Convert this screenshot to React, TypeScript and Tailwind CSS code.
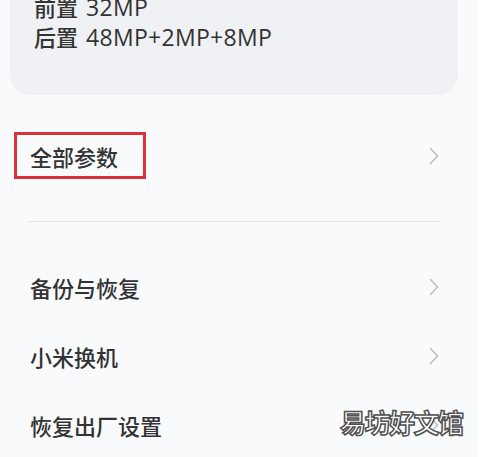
import React from "react";

const Chevron = () => (
  <svg className="mt-[5px]" width="10" height="18" viewBox="0 0 10 18" fill="none">
    <path d="M1.5 1.5 L8.5 9 L1.5 16.5" stroke="#bdbdbd" strokeWidth="1.4" strokeLinecap="round" strokeLinejoin="round" />
  </svg>
);

const Row = ({ label, boxed }: { label: string; boxed?: boolean }) => (
  <div className="flex items-center justify-between h-[71px] pl-[30px] pr-[38px]">
    <span className="relative mt-[5px] text-[22px] leading-none font-medium text-[#333333]">
      {boxed && (
        <span className="absolute -left-[16px] -top-[13px] w-[132px] h-[47px] border-[3px] border-[#d8333a]" />
      )}
      {label}
    </span>
    <Chevron />
  </div>
);

const SpecLine = ({ cjk, latin }: { cjk: string; latin: string }) => (
  <div className="flex items-baseline h-[30px]">
    <span className="text-[22px] font-medium">{cjk}</span>
    <span
      className="ml-[8px] text-[23px] font-medium tracking-[0.3px]"
      style={{ fontFamily: '"Open Sans", "Noto Sans", sans-serif' }}
    >
      {latin}
    </span>
  </div>
);

export default function App() {
  return (
    <div
      className="relative w-[487px] h-[457px] overflow-hidden bg-[#f9fafc] flex"
      style={{ fontFamily: '"Noto Sans CJK SC", "Noto Sans", sans-serif' }}
    >
      <div className="flex-1 flex flex-col">
        <div className="ml-[10px] mr-[19px] -mt-[40px] h-[138px] rounded-[20px] bg-[#eff1f4] pl-[24px] pt-[31px] leading-[30px] text-[#333333]">
          <SpecLine cjk="前置" latin="32MP" />
          <SpecLine cjk="后置" latin="48MP+2MP+8MP" />
        </div>
        <div className="h-[25px]" />
        <Row label="全部参数" boxed />
        <div className="h-[33px]" />
        <div className="mx-[28px] w-[412px] h-px bg-[#e6e7ea]" />
        <div className="h-[29px]" />
        <Row label="备份与恢复" />
        <Row label="小米换机" />
        <Row label="恢复出厂设置" />
      </div>
      <div className="w-[10px] bg-white" />
      <div className="absolute left-[340px] top-[409px] text-[26px] leading-none font-bold text-white tracking-[-1.5px] [-webkit-text-stroke:1.5px_#505050]">
        易坊好文馆
      </div>
    </div>
  );
}
